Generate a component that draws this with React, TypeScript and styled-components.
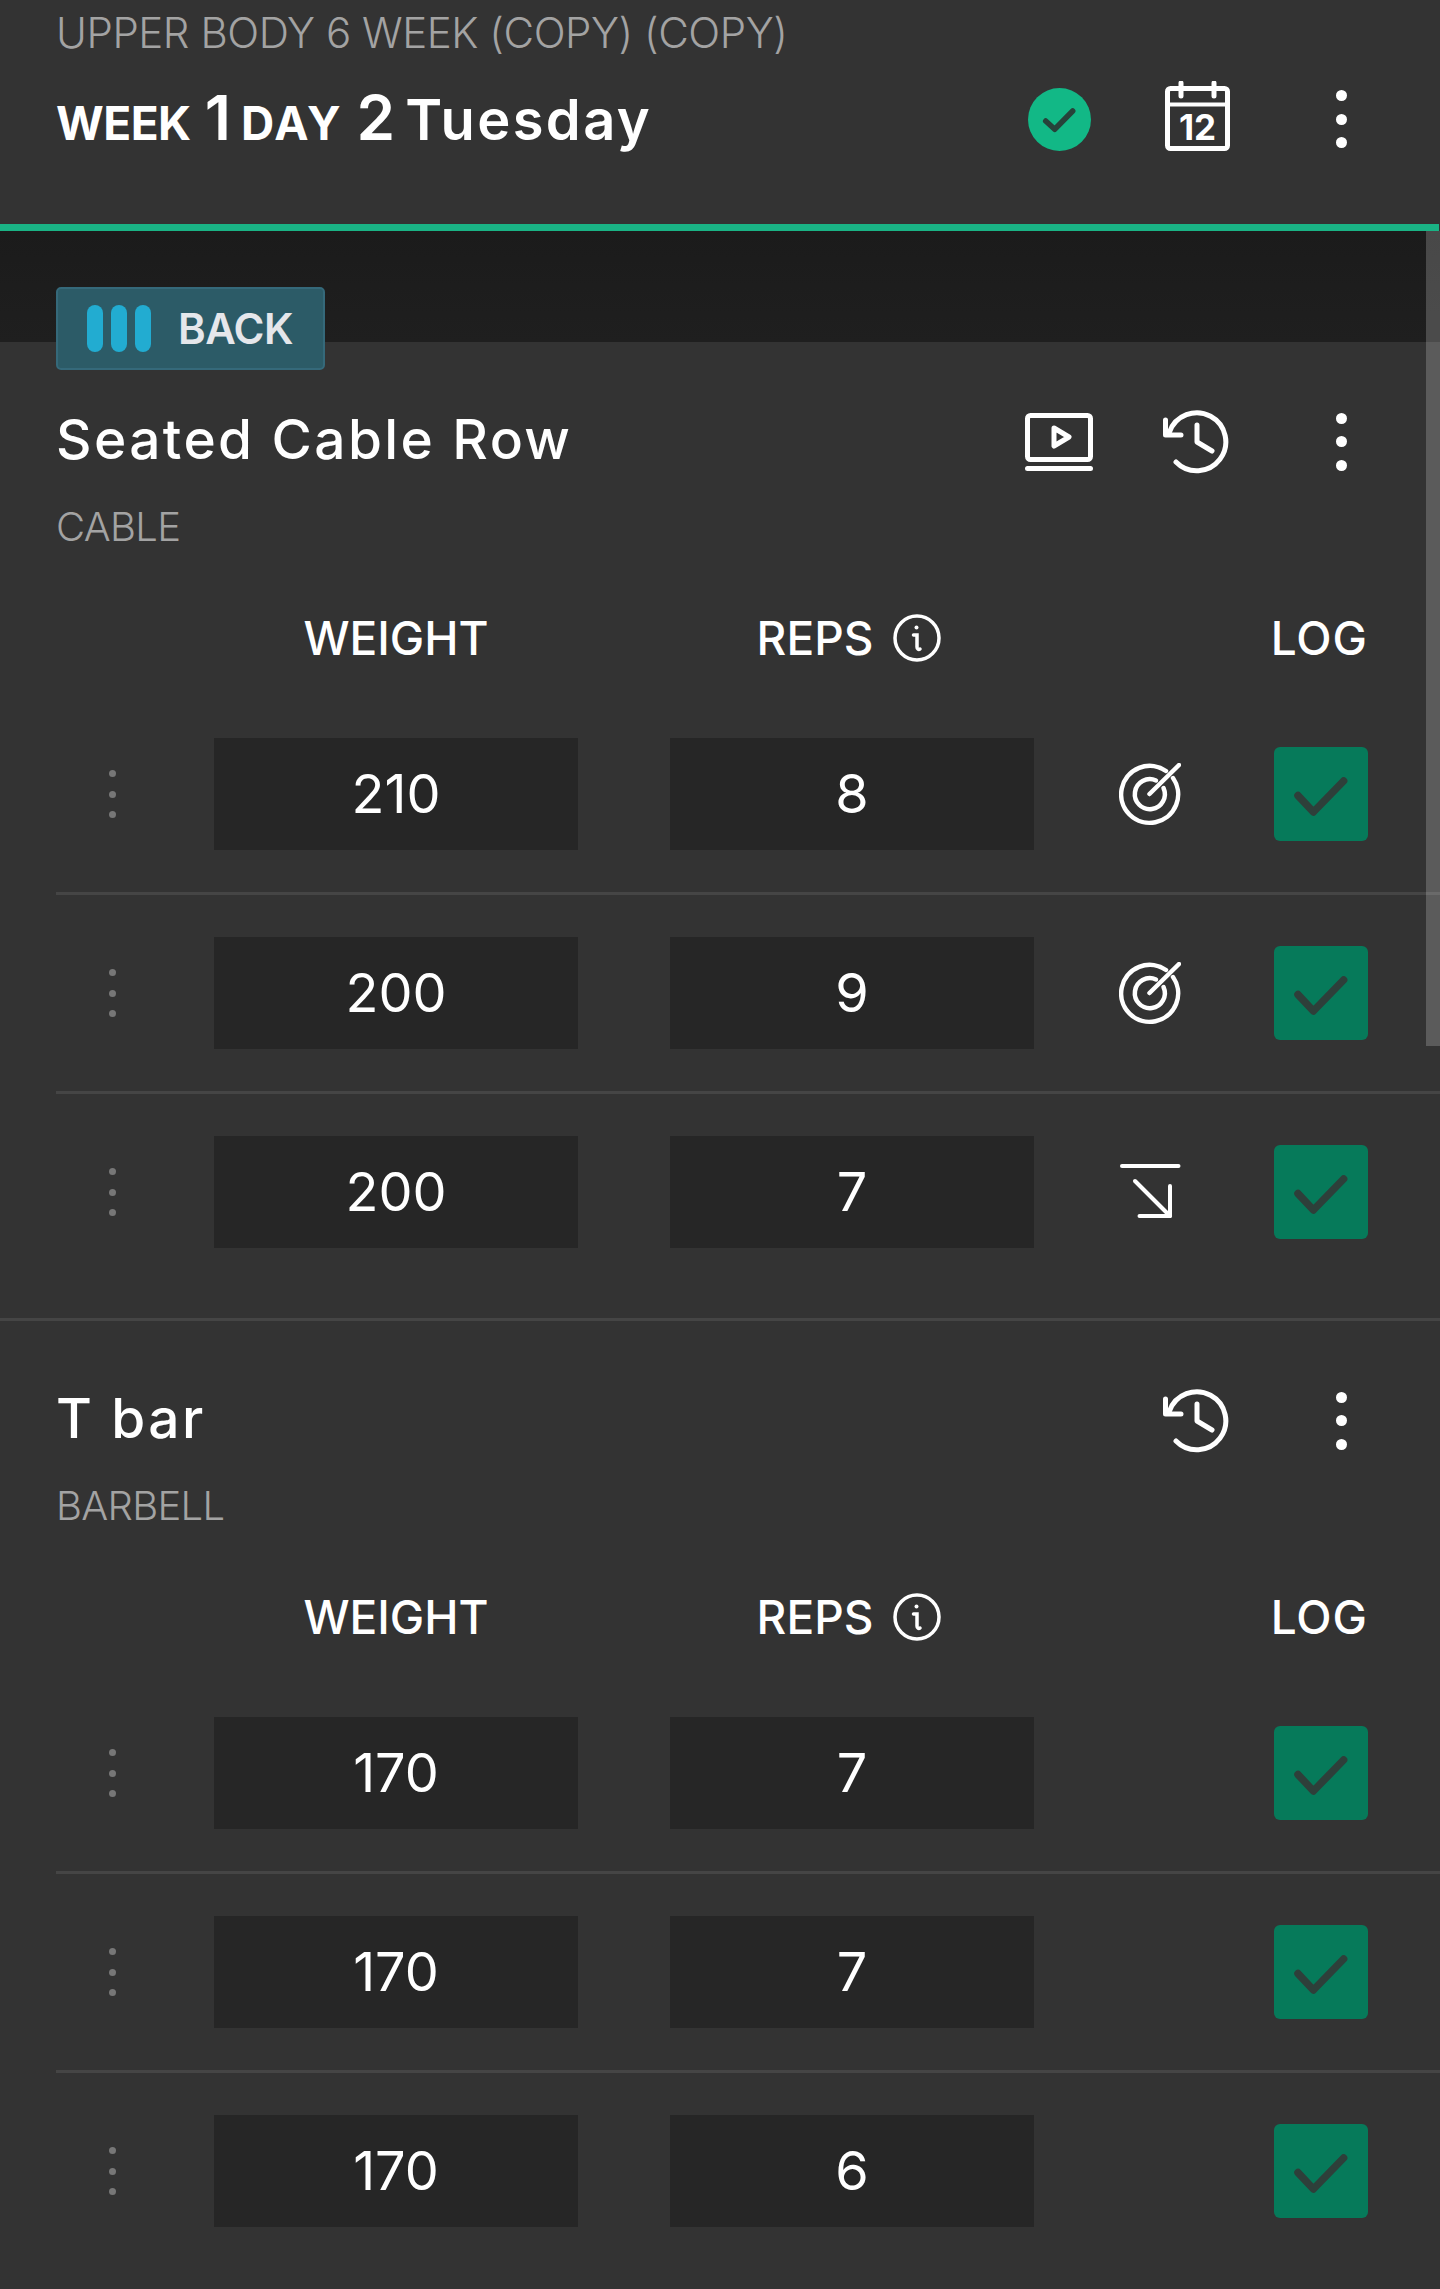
import { FunctionComponent } from "react";
import styled, { createGlobalStyle } from "styled-components";

const GlobalStyle = createGlobalStyle`
  html, body {
    margin: 0;
    padding: 0;
    background: #333333;
  }
  * {
    box-sizing: border-box;
  }
`;

const Page = styled.div`
  position: relative;
  width: 1440px;
  height: 2289px;
  overflow: hidden;
  background: #333333;
  color: #ffffff;
  font-family: Inter, "Open Sans", sans-serif;
`;
const Header = styled.header`
  height: 224px;
  padding: 8px 0 0 56px;
`;
const ProgramName = styled.div`
  height: 50px;
  line-height: 50px;
  font-size: 42px;
  font-weight: 300;
  letter-spacing: -0.45px;
  color: #a3a3a3;
  white-space: nowrap;
`;
const WorkoutRow = styled.div`
  height: 80px;
  margin-top: 21px;
  display: flex;
  align-items: center;
  justify-content: space-between;
  padding-right: 24px;
`;
const WorkoutTitle = styled.div`
  display: flex;
  align-items: baseline;
  margin-top: -3px;
  font-weight: 700;
  white-space: nowrap;
`;
const Small = styled.span<{ $tracking: number }>`
  font-size: 46px;
  letter-spacing: ${(p) => p.$tracking}px;
  margin-right: 14px;
`;
const Big = styled.span`
  font-size: 62px;
  font-weight: 600;
  margin-right: 10px;
`;
const Day = styled.span`
  font-size: 56px;
  font-weight: 600;
  letter-spacing: 2.4px;
`;
const Actions = styled.div`
  display: grid;
  grid-template-columns: 138px 138px 150px;
  justify-items: center;
  align-items: center;
`;
const ExerciseActions = styled(Actions)`
  margin-top: 3px;
`;
const ProgressLine = styled.div`
  height: 7px;
  width: 1439px;
  background: #1ab385;
`;
const Band = styled.div`
  height: 111px;
  background: linear-gradient(#1b1b1b, #1f1f1f);
`;
const Scrollbar = styled.div`
  position: absolute;
  top: 231px;
  right: 0;
  width: 14px;
  height: 815px;
  background: rgba(255, 255, 255, 0.2);
`;
const Section = styled.section<{ $divided?: boolean }>`
  padding-top: 58px;
  border-top: ${(p) => (p.$divided ? "3px solid #454545" : "0")};
`;
const MuscleTag = styled.div`
  width: 269px;
  height: 83px;
  margin: -113px 0 30px 56px;
  padding-left: 29px;
  display: flex;
  align-items: center;
  gap: 27px;
  background: #2c5b67;
  border: 2px solid #35697a;
  border-radius: 5px;
  font-size: 42px;
  font-weight: 600;
  letter-spacing: -0.5px;
  color: #e5e7eb;
`;
const MuscleBars = styled.div`
  display: flex;
  gap: 8px;
`;
const MuscleBar = styled.div`
  width: 16px;
  height: 47px;
  border-radius: 8px;
  background: #22acd1;
`;
const ExerciseHead = styled.div`
  height: 80px;
  padding: 0 24px 0 56px;
  display: flex;
  align-items: center;
  justify-content: space-between;
`;
const ExerciseName = styled.div`
  font-size: 55px;
  font-weight: 500;
  letter-spacing: 2.4px;
  margin-top: -2px;
  white-space: nowrap;
`;
const Equipment = styled.div`
  height: 50px;
  line-height: 50px;
  margin: 22px 0 56px 56px;
  font-size: 40px;
  font-weight: 300;
  letter-spacing: -0.7px;
  color: #a3a3a3;
`;
const TableGrid = styled.div`
  display: grid;
  grid-template-columns: 158px 456px 364px 240px 94px;
  margin-left: 56px;
  align-items: center;
`;
const ColumnHeads = styled(TableGrid)`
  height: 60px;
  margin-bottom: 28px;
  font-size: 46px;
  font-weight: 500;
  white-space: nowrap;
`;
const WeightHead = styled.div`
  grid-column: 2;
  width: 364px;
  text-align: center;
`;
const RepsHead = styled.div`
  grid-column: 3;
  display: flex;
  justify-content: center;
  align-items: center;
  gap: 20px;
  padding-right: 6px;
`;
const LogHead = styled.div`
  grid-column: 5;
  justify-self: end;
  letter-spacing: 1px;
`;
const SetRow = styled(TableGrid)`
  padding: 42px 0;
  border-bottom: 3px solid #454545;
  &:last-child {
    border-bottom: 0;
  }
`;
const SetList = styled.div`
  padding-bottom: 28px;
`;
const GripCell = styled.div`
  padding-left: 53px;
`;
const Dots = styled.div<{ $size: number; $gap: number; $color: string }>`
  display: flex;
  flex-direction: column;
  gap: ${(p) => p.$gap}px;
  & > i {
    display: block;
    width: ${(p) => p.$size}px;
    height: ${(p) => p.$size}px;
    border-radius: 50%;
    background: ${(p) => p.$color};
  }
`;
const ValueBox = styled.div`
  width: 364px;
  height: 112px;
  padding-bottom: 2px;
  background: #262626;
  display: flex;
  align-items: center;
  justify-content: center;
  font-size: 54px;
  font-weight: 400;
`;
const StatusCell = styled.div`
  padding-right: 8px;
  display: flex;
  justify-content: center;
`;
const LogBox = styled.div`
  width: 94px;
  height: 94px;
  border-radius: 6px;
  background: #067a5a;
  display: flex;
`;
const CalendarSvg = styled.svg`
  margin-bottom: 6px;
`;

const Kebab = () => (
  <Dots $size={11} $gap={12.5} $color="#ffffff">
    <i />
    <i />
    <i />
  </Dots>
);

const DoneIcon = () => (
  <svg width="63" height="63" viewBox="0 0 63 63">
    <circle cx="31.5" cy="31.5" r="31.5" fill="#12b886" />
    <path d="M17.7 33 26.7 41.3 44.7 23" fill="none" stroke="#27423a" strokeWidth="5.5" strokeLinecap="round" strokeLinejoin="round" />
  </svg>
);

const CalendarIcon = () => (
  <CalendarSvg width="65" height="70" viewBox="0 0 65 70" fill="none" stroke="#fff" strokeWidth="5">
    <rect x="2.5" y="7.5" width="60" height="60" rx="3" strokeLinejoin="round" />
    <path d="M2.5 23.5H62.5" strokeWidth="4" />
    <path d="M16 2V15M49 2V15" strokeLinecap="round" />
    <text x="32.5" y="59" textAnchor="middle" fill="#fff" stroke="none" fontFamily="Inter, sans-serif" fontSize="35" fontWeight="700">
      12
    </text>
  </CalendarSvg>
);

const VideoIcon = () => (
  <svg width="68" height="58" viewBox="0 0 68 58" fill="none" stroke="#fff" strokeWidth="5" strokeLinejoin="round" strokeLinecap="round">
    <rect x="2.5" y="2.5" width="63" height="44" rx="3" />
    <path d="M29 15 44 24 29 33Z" />
    <path d="M2.5 55.5H65.5" />
  </svg>
);

const HistoryIcon = () => (
  <svg width="68" height="64" viewBox="0 0 68 64" fill="none" stroke="#fff" strokeWidth="5" strokeLinejoin="round" strokeLinecap="round">
    <path d="M6.5 22A29 29 0 1 1 13 52" />
    <path d="M2.5 10V25H18" />
    <path d="M34 15V32L49 41" />
  </svg>
);

const InfoIcon = () => (
  <svg width="48" height="48" viewBox="0 0 48 48" fill="none" stroke="#fff" strokeWidth="3.5" strokeLinecap="round">
    <circle cx="24" cy="24" r="22" />
    <circle cx="23.5" cy="13.5" r="2" fill="#fff" stroke="none" />
    <path d="M20.5 21H24V33C24 35 25.5 36 27 35" />
  </svg>
);

const TargetIcon = () => (
  <svg width="62" height="63" viewBox="0 0 62 63" fill="none" stroke="#fff" strokeWidth="4.5" strokeLinecap="round">
    <path d="M47 8A28.5 28.5 0 1 0 54 15" />
    <path d="M37 17.5A15 15 0 1 0 44.5 25" />
    <path d="M30.5 31 60 2" />
  </svg>
);

const BelowIcon = () => (
  <svg width="62" height="60" viewBox="0 0 62 60" fill="none" stroke="#fff" strokeWidth="4" strokeLinecap="round" strokeLinejoin="round">
    <path d="M3 4H59.5" />
    <path d="M16 19 51 54" />
    <path d="M51 24V54H20.5" />
  </svg>
);

const CheckIcon = () => (
  <svg width="94" height="94" viewBox="0 0 94 94" fill="none">
    <path d="M24 48.6 39.4 65 69.6 34" stroke="#2e3f3a" strokeWidth="7.5" strokeLinecap="round" strokeLinejoin="round" />
  </svg>
);

type SetData = {
  weight: number;
  reps: number;
  status?: "target" | "below";
};

type ExerciseProps = {
  name: string;
  equipment: string;
  sets: SetData[];
  tag?: string;
  video?: boolean;
  divided?: boolean;
};

const Exercise: FunctionComponent<ExerciseProps> = ({ name, equipment, sets, tag, video, divided }) => (
  <Section $divided={divided}>
    {tag && (
      <MuscleTag>
        <MuscleBars>
          <MuscleBar />
          <MuscleBar />
          <MuscleBar />
        </MuscleBars>
        {tag}
      </MuscleTag>
    )}
    <ExerciseHead>
      <ExerciseName>{name}</ExerciseName>
      <ExerciseActions>
        {video ? <VideoIcon /> : <span />}
        <HistoryIcon />
        <Kebab />
      </ExerciseActions>
    </ExerciseHead>
    <Equipment>{equipment}</Equipment>
    <ColumnHeads>
      <WeightHead>WEIGHT</WeightHead>
      <RepsHead>
        REPS
        <InfoIcon />
      </RepsHead>
      <LogHead>LOG</LogHead>
    </ColumnHeads>
    <SetList>
      {sets.map((set, i) => (
        <SetRow key={i}>
          <GripCell>
            <Dots $size={7} $gap={13.5} $color="#777777">
              <i />
              <i />
              <i />
            </Dots>
          </GripCell>
          <ValueBox>{set.weight}</ValueBox>
          <ValueBox>{set.reps}</ValueBox>
          <StatusCell>
            {set.status === "target" && <TargetIcon />}
            {set.status === "below" && <BelowIcon />}
          </StatusCell>
          <LogBox>
            <CheckIcon />
          </LogBox>
        </SetRow>
      ))}
    </SetList>
  </Section>
);

const App = () => (
  <Page>
    <GlobalStyle />
    <Header>
      <ProgramName>UPPER BODY 6 WEEK (COPY) (COPY)</ProgramName>
      <WorkoutRow>
        <WorkoutTitle>
          <Small $tracking={-0.5}>WEEK</Small>
          <Big>1</Big>
          <Small $tracking={2}>DAY</Small>
          <Big>2</Big>
          <Day>Tuesday</Day>
        </WorkoutTitle>
        <Actions>
          <DoneIcon />
          <CalendarIcon />
          <Kebab />
        </Actions>
      </WorkoutRow>
    </Header>
    <ProgressLine />
    <Band />
    <Exercise
      name="Seated Cable Row"
      equipment="CABLE"
      tag="BACK"
      video
      sets={[
        { weight: 210, reps: 8, status: "target" },
        { weight: 200, reps: 9, status: "target" },
        { weight: 200, reps: 7, status: "below" },
      ]}
    />
    <Exercise
      name="T bar"
      equipment="BARBELL"
      divided
      sets={[
        { weight: 170, reps: 7 },
        { weight: 170, reps: 7 },
        { weight: 170, reps: 6 },
      ]}
    />
    <Scrollbar />
  </Page>
);

export default App;
